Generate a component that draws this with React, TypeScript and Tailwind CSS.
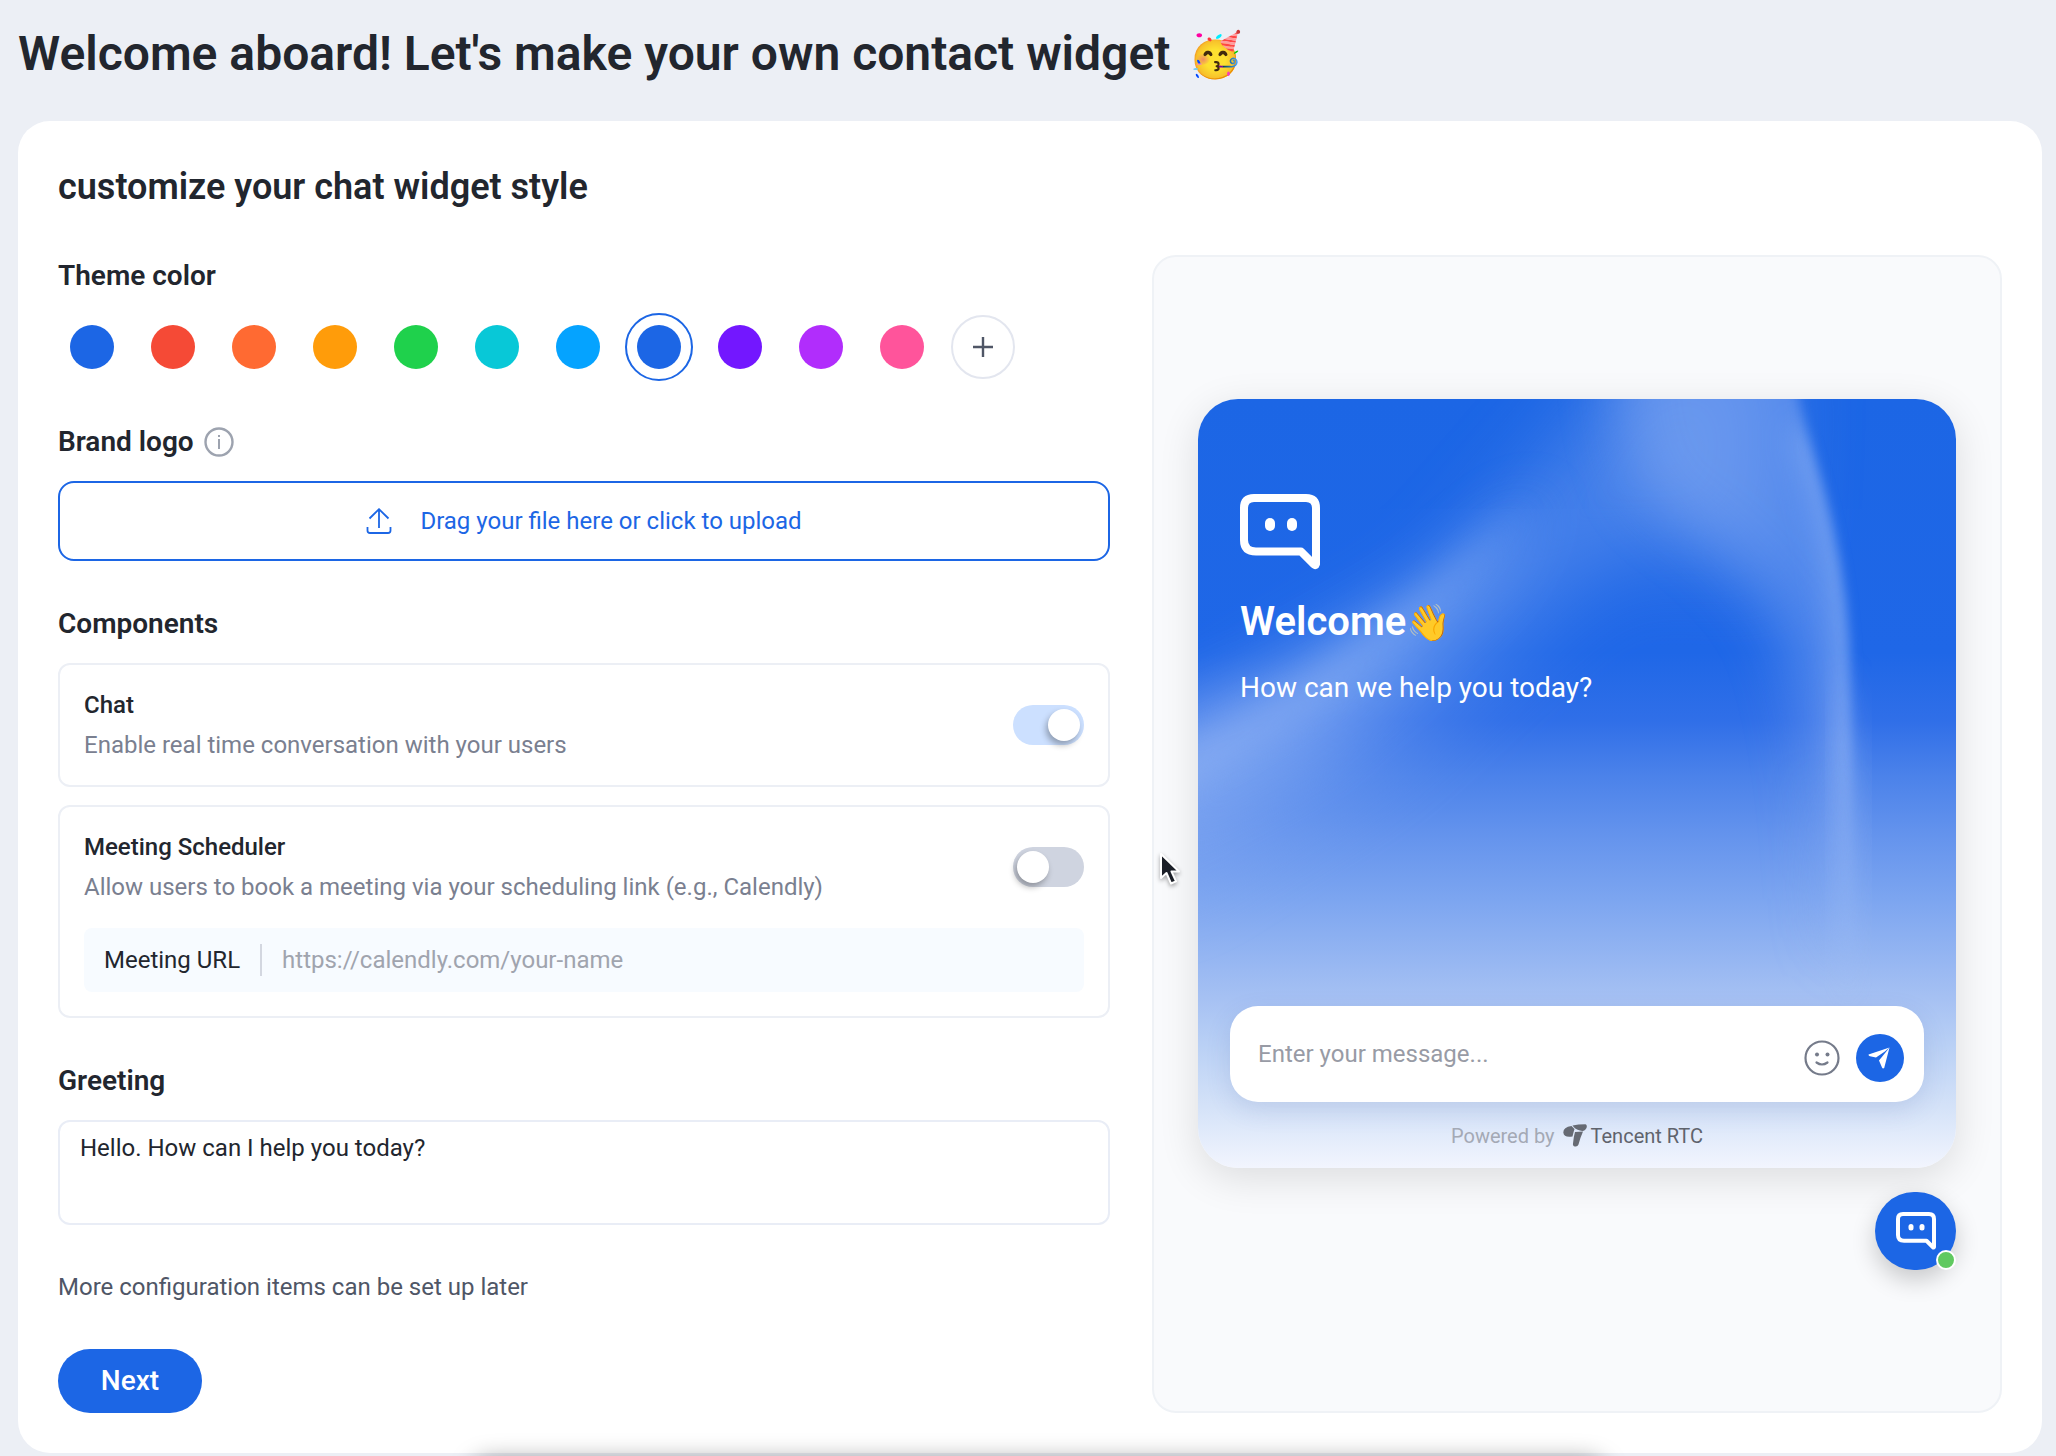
import { useState } from 'react'

const THEME_COLORS = [
  { name: 'Default blue', value: '#1c66e5' },
  { name: 'Red', value: '#f54a36' },
  { name: 'Orange', value: '#ff6a32' },
  { name: 'Amber', value: '#ff9c0a' },
  { name: 'Green', value: '#1fd14c' },
  { name: 'Teal', value: '#08c8d7' },
  { name: 'Sky', value: '#05a3ff' },
  { name: 'Blue', value: '#1c66e5' },
  { name: 'Violet', value: '#7317ff' },
  { name: 'Purple', value: '#b12dfc' },
  { name: 'Pink', value: '#ff549b' },
]

function BotIcon({ className }: { className: string }) {
  return (
    <svg viewBox="0 0 80 76" className={className} fill="none" aria-hidden="true">
      <path
        d="M14 4H66Q76 4 76 14V70Q75.500 72 74 70.500L61 57.500H16Q4 57.500 4 46V14Q4 4 14 4Z"
        stroke="white"
        strokeWidth="8"
        strokeLinejoin="round"
      />
      <rect x="25" y="24" width="10" height="13" rx="5" fill="white" />
      <rect x="47" y="24" width="10" height="13" rx="5" fill="white" />
    </svg>
  )
}

function InfoIcon() {
  return (
    <svg viewBox="0 0 30 30" className="size-[30px]" fill="none" stroke="#9da3af" strokeWidth="2" aria-hidden="true">
      <circle cx="15" cy="15" r="13.500" strokeWidth="2.400" />
      <path d="M15 12V22M15 8V10" />
    </svg>
  )
}

function UploadIcon() {
  return (
    <svg viewBox="0 0 26 26" className="size-[26px]" fill="none" stroke="currentColor" strokeWidth="1.800" aria-hidden="true">
      <path d="M13 20V1.500M3.500 10.500L13 1.200L22.500 10.500" />
      <path d="M1.500 19V22.500Q1.500 25 4 25H22Q24.500 25 24.500 22.500V19" />
    </svg>
  )
}

function SmileIcon() {
  return (
    <svg viewBox="0 0 36 36" className="size-9" fill="none" stroke="#757b8a" strokeWidth="2.200" strokeLinecap="round" aria-hidden="true">
      <circle cx="18" cy="18" r="16.500" />
      <circle cx="13" cy="14.500" r="2" fill="#757b8a" stroke="none" />
      <circle cx="23.500" cy="14.500" r="2" fill="#757b8a" stroke="none" />
      <path d="M12.500 22.500Q18 26.500 23.500 22.500" />
    </svg>
  )
}

function SendIcon() {
  return (
    <svg viewBox="0 0 48 48" className="size-12" fill="white" aria-hidden="true">
      <path d="M33.500 13.500L12.500 20.500Q12.500 22 14 22.300L20 23.600L28.500 17.800Z" />
      <path d="M33.500 13.500L28.200 34Q26.800 35.200 26 33.500L23 26.500L29.500 18.500Z" />
    </svg>
  )
}

function TencentIcon() {
  return (
    <svg viewBox="0 0 24 23" className="h-[23px] w-6" fill="#666a73" aria-hidden="true">
      <path d="M8.500 2L11.500 5Q10.500 8 9.500 12.500Q1 14 0.300 8.500Q0.300 3 8.500 2Z" />
      <path d="M9.500 1.500Q15 0.200 22.500 0.200Q24.500 1 23.500 4L22 6Q20 7.500 17 6.500Q12 5.500 9.500 1.500Z" />
      <path d="M12 8L20 7.500Q17.500 13 15.500 20.500Q14.500 23 12 22.500Q9.500 22 10 19.500Q10.500 13 12 8Z" />
    </svg>
  )
}

function CursorIcon() {
  return (
    <svg viewBox="0 0 26 36" className="pointer-events-none absolute top-[851px] left-[1158px] h-9 w-[26px] drop-shadow-[0_2px_2px_rgba(0,0,0,0.35)]" aria-hidden="true">
      <path d="M3 3V27L8.500 22L13 32.500L18 30.300L13.500 20.500H21Z" fill="#1b1f27" stroke="white" strokeWidth="2" strokeLinejoin="round" />
    </svg>
  )
}

// blue-to-white wash with two light beams crossing it
function WidgetBackdrop() {
  return (
    <svg viewBox="0 0 759 769" preserveAspectRatio="none" className="absolute inset-0 size-full" aria-hidden="true">
      <defs>
        <linearGradient id="base" x1="0" y1="0" x2="0" y2="1">
          <stop offset="0" stopColor="#1c66e5" />
          <stop offset="0.33" stopColor="#1f67e7" />
          <stop offset="0.42" stopColor="#306fe8" />
          <stop offset="0.49" stopColor="#4b82ea" />
          <stop offset="0.57" stopColor="#6594ed" />
          <stop offset="0.65" stopColor="#7ca5f0" />
          <stop offset="0.78" stopColor="#a6c1f3" />
          <stop offset="0.84" stopColor="#b9d0f5" />
          <stop offset="0.92" stopColor="#d4e2f8" />
          <stop offset="1" stopColor="#f2f5fe" />
        </linearGradient>
        <linearGradient id="fade" x1="0" y1="0" x2="0" y2="1">
          <stop offset="0" stopColor="white" />
          <stop offset="0.45" stopColor="white" />
          <stop offset="0.85" stopColor="black" />
        </linearGradient>
        <filter id="wide" x="-50%" y="-50%" width="200%" height="200%"><feGaussianBlur stdDeviation="44" /></filter>
        <filter id="soft" x="-50%" y="-50%" width="200%" height="200%"><feGaussianBlur stdDeviation="30" /></filter>
        <filter id="mid" x="-50%" y="-50%" width="200%" height="200%"><feGaussianBlur stdDeviation="16" /></filter>
        <filter id="thin" x="-50%" y="-50%" width="200%" height="200%"><feGaussianBlur stdDeviation="6" /></filter>
        <mask id="edge" maskUnits="userSpaceOnUse" x="0" y="0" width="759" height="769">
          <path d="M-60 -60H588Q600 0 618 60Q646 150 652 240Q658 400 656 800H-60Z" fill="white" filter="url(#thin)" />
        </mask>
        <mask id="lower" maskUnits="userSpaceOnUse" x="0" y="0" width="759" height="769">
          <rect width="759" height="769" fill="url(#fade)" />
        </mask>
      </defs>
      <rect width="759" height="769" fill="url(#base)" />
      <path d="M-60 360L240 190L370 40L440 -60H580L570 180Q450 120 370 190L180 370L-60 520Z" fill="#8fb0f3" opacity="0.38" filter="url(#wide)" />
      <path d="M-80 330L100 262L230 184L350 90L300 180L210 270L110 360L-80 460Z" fill="#9dbcf5" opacity="0.42" filter="url(#soft)" />
      <path d="M-60 370L100 280L230 188L335 100L240 210L120 310L-60 420Z" fill="#a9c4f7" opacity="0.26" filter="url(#mid)" />
      <g mask="url(#lower)">
        <g mask="url(#edge)">
          <path d="M420 -80H700V560H630Q625 330 580 225Q530 150 460 110Q415 70 420 -80Z" fill="#9db9f4" opacity="0.4" filter="url(#soft)" />
          <path d="M592 30Q640 160 640 320L646 560H672V200L630 30Z" fill="#a2c1f8" opacity="0.4" filter="url(#mid)" />
        </g>
        <path d="M644 260Q668 380 662 620L640 620Q650 400 644 260Z" fill="#a8c4f7" opacity="0.55" filter="url(#mid)" />
      </g>
    </svg>
  )
}

function Toggle({ id, checked, onChange }: { id: string; checked: boolean; onChange: (v: boolean) => void }) {
  return (
    <span className="relative h-10 w-[71px] shrink-0">
      <input
        id={id}
        type="checkbox"
        role="switch"
        checked={checked}
        onChange={(e) => onChange(e.target.checked)}
        className="peer block size-full cursor-pointer appearance-none rounded-full bg-[#cfd4e0] checked:bg-[#cce0ff]"
      />
      <span className="pointer-events-none absolute top-1 left-1 size-8 rounded-full bg-white shadow-[-2px_4px_6px_rgba(0,0,0,0.3)] peer-checked:right-1 peer-checked:left-auto" />
    </span>
  )
}

function ComponentRow(props: { id: string; title: string; desc: string; checked: boolean; onChange: (v: boolean) => void }) {
  return (
    <div className="flex items-center justify-between">
      <label htmlFor={props.id} className="text-2xl leading-10">
        <span className="block font-medium">{props.title}</span>
        <span className="block text-[#7a8090]">{props.desc}</span>
      </label>
      <Toggle id={props.id} checked={props.checked} onChange={props.onChange} />
    </div>
  )
}

function ChatPreview() {
  return (
    <div className="flex flex-col">
      <div className="relative flex h-[769px] flex-col overflow-hidden rounded-[40px] px-8 pt-[95px] pb-[18px] text-white shadow-[0_10px_40px_rgba(0,0,0,0.12)]">
        <WidgetBackdrop />
        <div className="relative flex flex-1 flex-col px-2.5">
          <BotIcon className="h-[76px] w-20" />
          <h3 className="mt-7 text-[40px] leading-12 font-semibold">
            Welcome<span className="text-4xl">👋</span>
          </h3>
          <p className="mt-[22px] text-[28px] leading-10">How can we help you today?</p>
        </div>
        <div className="relative flex h-24 items-end rounded-[28px] bg-white pr-5 pb-5 pl-7 shadow-[0_8px_24px_rgba(60,90,160,0.15)]">
          <input
            type="text"
            aria-label="Message"
            placeholder="Enter your message..."
            className="h-14 min-w-0 flex-1 text-2xl text-gray-900 outline-none placeholder:text-[#989ba5]"
          />
          <div className="flex items-center gap-4">
            <button type="button" aria-label="Emoji"><SmileIcon /></button>
            <button type="button" aria-label="Send" className="rounded-full bg-[#1c66e5]"><SendIcon /></button>
          </div>
        </div>
        <div className="relative mt-5 flex items-center justify-center text-xl text-[#a4a9b5]">
          <span className="mr-2">Powered by</span>
          <TencentIcon />
          <span className="ml-1 text-[#5f636c]">Tencent RTC</span>
        </div>
      </div>
      <button type="button" aria-label="Open chat" className="relative mt-6 flex h-[78px] w-[81px] items-center justify-center self-end rounded-full bg-[#1c66e5] shadow-[0_10px_24px_rgba(0,0,0,0.2)]">
        <BotIcon className="h-[38px] w-10" />
        <span className="absolute right-0 bottom-0 size-5 rounded-full border-2 border-white bg-[#60c960]" />
      </button>
    </div>
  )
}

export default function App() {
  const [color, setColor] = useState('Blue')
  const [chat, setChat] = useState(true)
  const [meeting, setMeeting] = useState(false)
  const [url, setUrl] = useState('')
  const [greeting, setGreeting] = useState('Hello. How can I help you today?')

  return (
    <div className="relative min-h-screen overflow-hidden bg-[#eceff5] pt-6 pr-[14px] pl-[18px] font-[Roboto,sans-serif] text-[#22262e]">
      <h1 className="text-5xl leading-[60px] font-semibold">
        Welcome aboard! Let's make your own contact widget <span className="ml-1.5 text-[44px]">🥳</span>
      </h1>
      <main className="mt-9 rounded-[32px] bg-white p-10">
        <h2 className="text-4xl leading-[52px] font-semibold">customize your chat widget style</h2>
        <div className="mt-[42px] grid grid-cols-[1052fr_850fr] gap-[42px]">
          <form className="flex flex-col" onSubmit={(e) => e.preventDefault()}>
            <h3 className="text-[28px] leading-[42px] font-semibold">Theme color</h3>
            <div className="mt-4 flex items-center gap-[13px]">
              {THEME_COLORS.map((c) => (
                <button
                  key={c.name}
                  type="button"
                  aria-label={c.name}
                  onClick={() => setColor(c.name)}
                  className={`flex size-17 items-center justify-center rounded-full ${color === c.name ? 'border-2 border-[#1c66e5]' : ''}`}
                >
                  <span className="size-11 rounded-full" style={{ backgroundColor: c.value }} />
                </button>
              ))}
              <button type="button" aria-label="Add color" className="mx-0.5 flex size-16 items-center justify-center rounded-full border-2 border-[#e3e6ef]">
                <svg viewBox="0 0 20 20" className="size-5" stroke="#4f5666" strokeWidth="2.400" aria-hidden="true">
                  <path d="M10 0V20M0 10H20" />
                </svg>
              </button>
            </div>

            <div className="mt-10 flex items-center gap-2.5">
              <h3 className="text-[28px] leading-[42px] font-semibold">Brand logo</h3>
              <InfoIcon />
            </div>
            <button type="button" className="mt-[18px] flex h-20 items-center justify-center gap-7 rounded-2xl border-2 border-[#1c66e5] text-2xl text-[#1c66e5]">
              <UploadIcon />
              Drag your file here or click to upload
            </button>

            <h3 className="mt-[42px] text-[28px] leading-[42px] font-semibold">Components</h3>
            <div className="mt-[18px] rounded-xl border-2 border-[#eceff5] px-6 py-5">
              <ComponentRow id="chat" title="Chat" desc="Enable real time conversation with your users" checked={chat} onChange={setChat} />
            </div>
            <div className="mt-[18px] rounded-xl border-2 border-[#eceff5] px-6 pt-5 pb-6">
              <ComponentRow
                id="meeting"
                title="Meeting Scheduler"
                desc="Allow users to book a meeting via your scheduling link (e.g., Calendly)"
                checked={meeting}
                onChange={setMeeting}
              />
              <div className="mt-[21px] flex h-16 items-center gap-5 rounded-lg bg-[#f7fbff] px-5 text-2xl">
                <label htmlFor="meeting-url">Meeting URL</label>
                <span className="h-8 w-0.5 bg-[#d3d7e0]" />
                <input
                  id="meeting-url"
                  type="text"
                  value={url}
                  onChange={(e) => setUrl(e.target.value)}
                  placeholder="https://calendly.com/your-name"
                  className="min-w-0 flex-1 bg-transparent outline-none placeholder:text-[#a0a4ae]"
                />
              </div>
            </div>

            <label htmlFor="greeting" className="mt-[42px] text-[28px] leading-[42px] font-semibold">Greeting</label>
            <textarea
              id="greeting"
              value={greeting}
              onChange={(e) => setGreeting(e.target.value)}
              className="mt-[18px] h-[105px] resize-none rounded-xl border-2 border-[#e9edf6] px-5 py-1.5 text-2xl leading-10 outline-none"
            />

            <p className="mt-[42px] text-2xl leading-10 text-[#4f5666]">More configuration items can be set up later</p>
            <button type="submit" className="mt-[42px] h-16 w-36 rounded-full bg-[#1c66e5] text-[28px] font-medium text-white">Next</button>
          </form>

          <section aria-label="Preview" className="flex flex-col justify-center rounded-3xl border-2 border-[#eff2f6] bg-[#f9fafc] px-11">
            <ChatPreview />
          </section>
        </div>
      </main>
      <div className="pointer-events-none absolute right-[22%] -bottom-9 left-[23%] h-8 rounded-full shadow-[0_0_24px_rgba(0,0,0,0.4)]" />
      <CursorIcon />
    </div>
  )
}
